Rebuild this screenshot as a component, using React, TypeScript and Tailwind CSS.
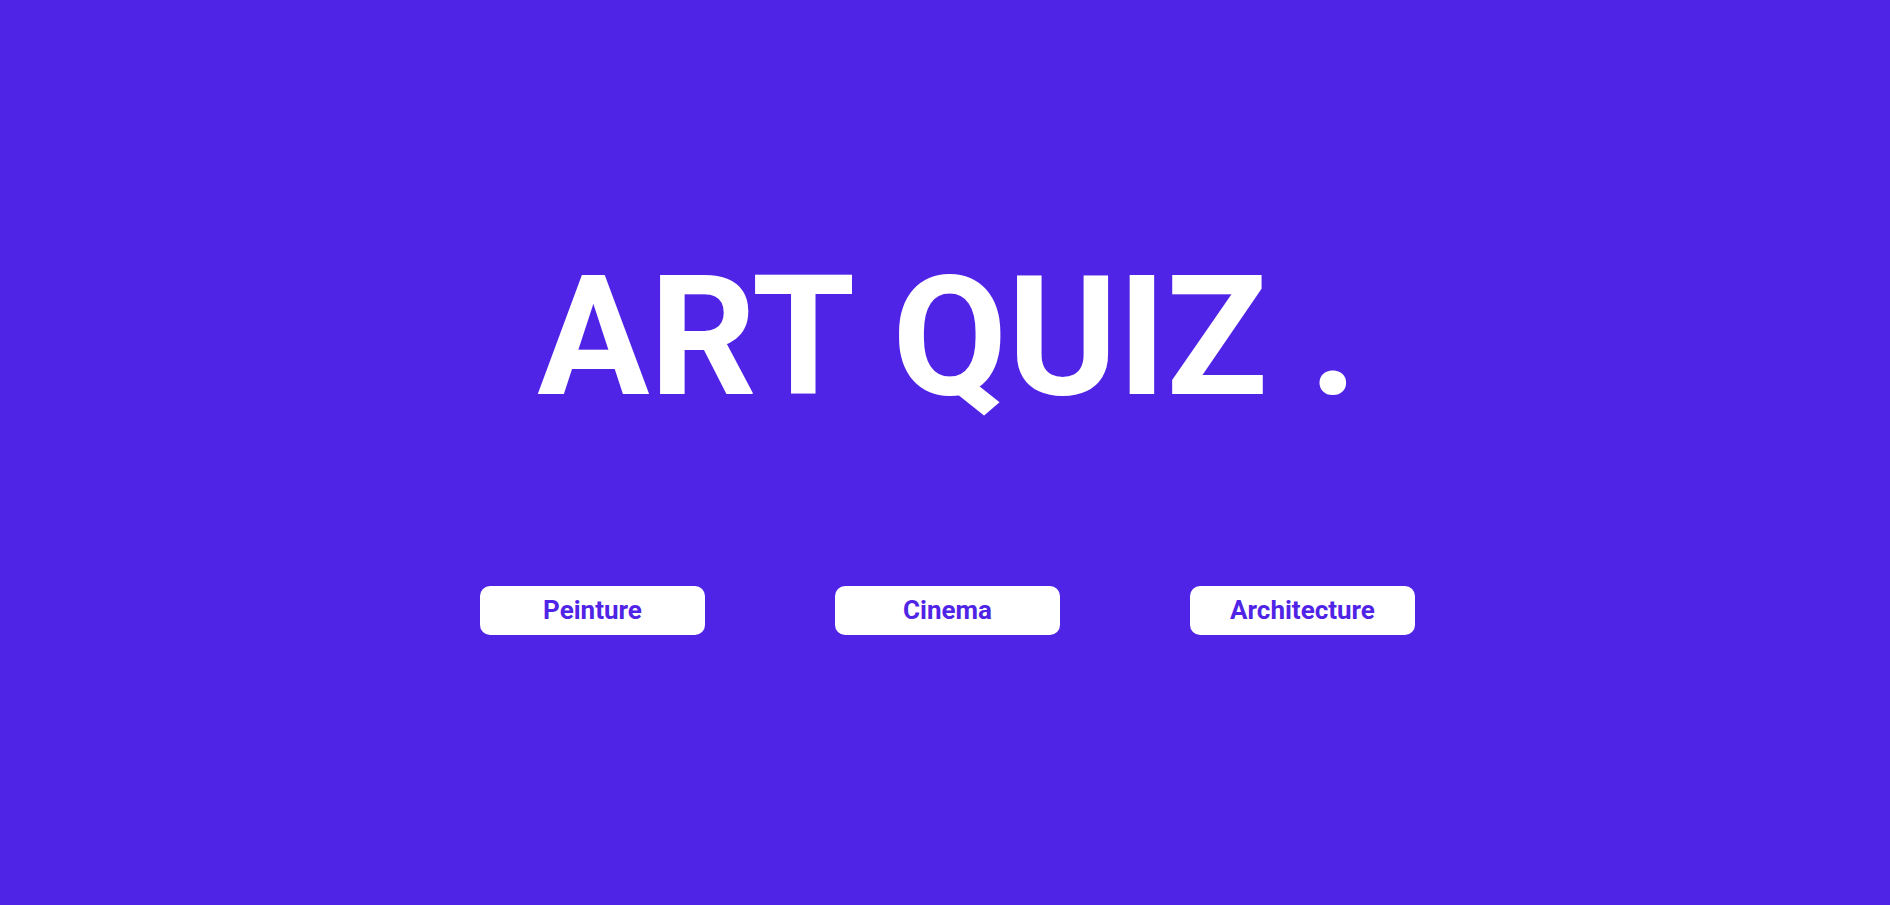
export default function App() {
  const cats = ["Peinture", "Cinema", "Architecture"];
  return (
    <div
      className="w-full h-[905px] bg-[#5024e6] flex flex-col items-center pl-[5px]"
      style={{ fontFamily: "Roboto, 'Noto Sans', sans-serif" }}
    >
      <h1 className="mt-[254px] text-white font-bold text-[167px] leading-none whitespace-pre">
        ART QUIZ .
      </h1>
      <div className="mt-[165px] flex gap-[130px]">
        {cats.map((c) => (
          <button
            key={c}
            className="w-[225px] h-[49px] pb-[2px] bg-white rounded-[10px] text-[#5024e6] font-bold text-[26px] leading-none"
          >
            {c}
          </button>
        ))}
      </div>
    </div>
  );
}
